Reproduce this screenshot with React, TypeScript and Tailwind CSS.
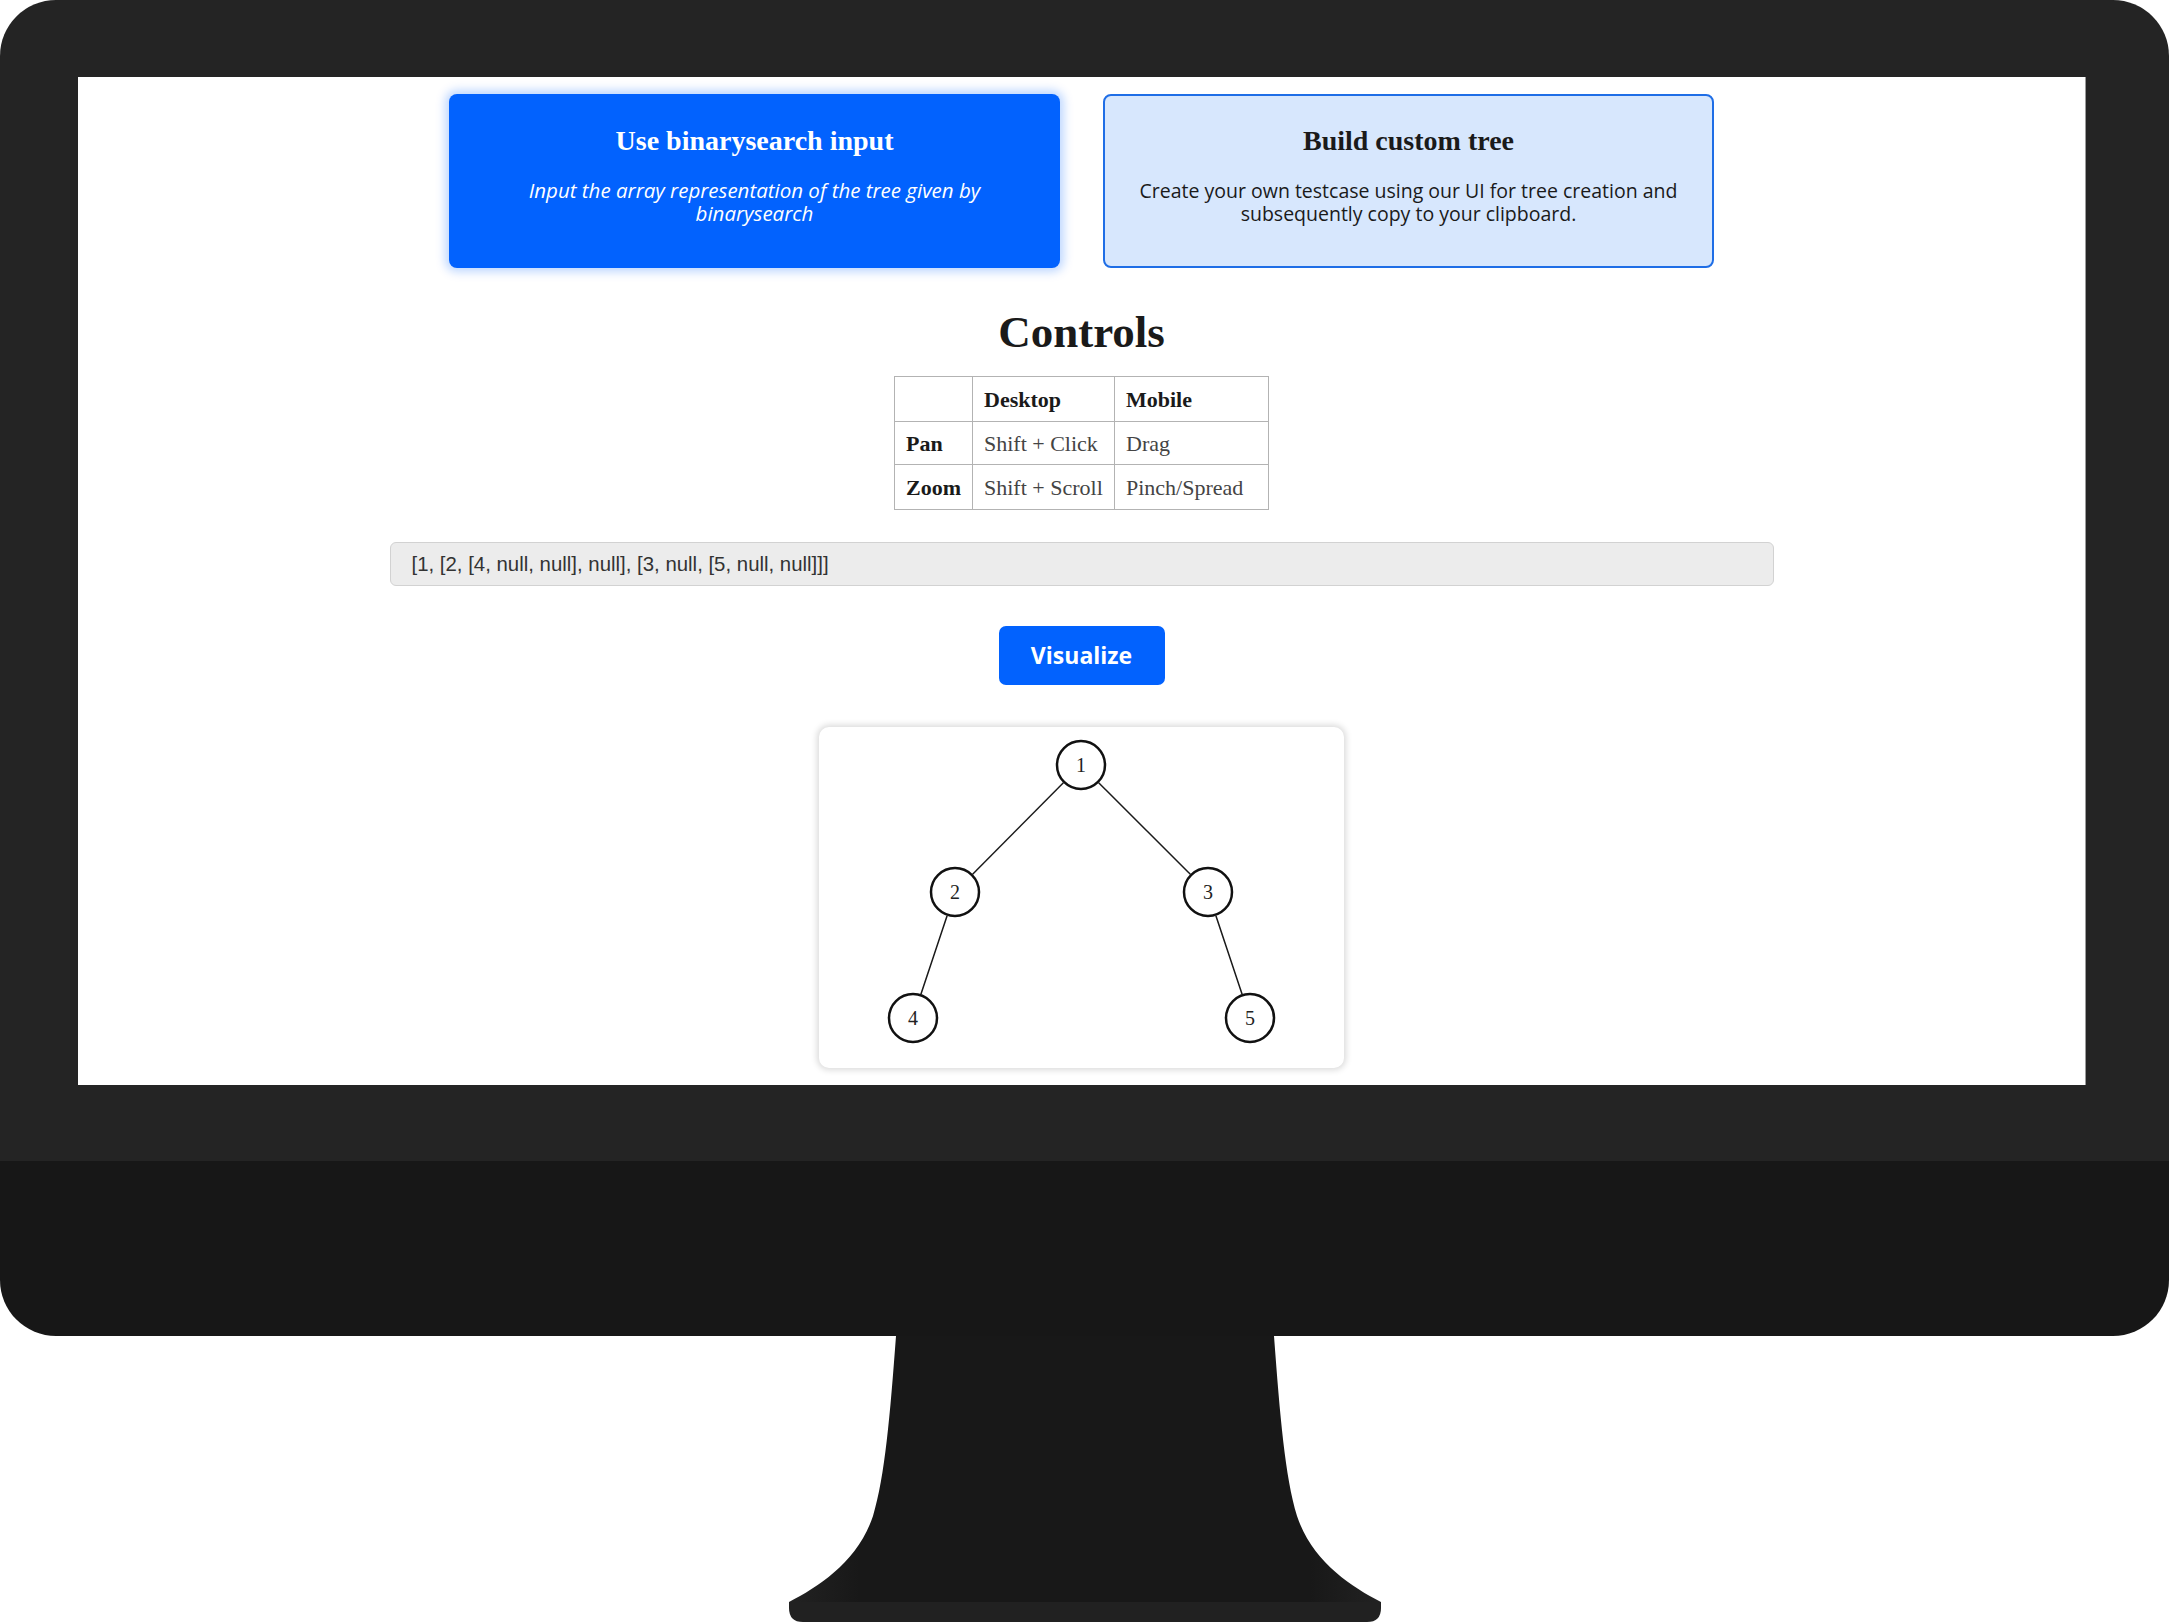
import React from "react";

const serif = "font-['Liberation_Serif',serif]";

const nodes = [
  { id: 1, x: 262, y: 38 },
  { id: 2, x: 136, y: 165 },
  { id: 3, x: 389, y: 165 },
  { id: 4, x: 94, y: 291 },
  { id: 5, x: 431, y: 291 },
];

const edges: [number, number][] = [
  [1, 2],
  [1, 3],
  [2, 4],
  [3, 5],
];

const R = 25;

function TreeView() {
  const byId = (id: number) => nodes.find((n) => n.id === id)!;
  return (
    <svg width="525" height="341" viewBox="0 0 525 341">
      {edges.map(([a, b]) => {
        const p = byId(a);
        const q = byId(b);
        const dx = q.x - p.x;
        const dy = q.y - p.y;
        const len = Math.hypot(dx, dy);
        const ux = dx / len;
        const uy = dy / len;
        return (
          <line
            key={`${a}-${b}`}
            x1={p.x + ux * R}
            y1={p.y + uy * R}
            x2={q.x - ux * R}
            y2={q.y - uy * R}
            stroke="#1a1a1a"
            strokeWidth={1.5}
          />
        );
      })}
      {nodes.map((n) => (
        <g key={n.id}>
          <circle
            cx={n.x}
            cy={n.y}
            r={R - 1}
            fill="white"
            stroke="#111"
            strokeWidth={2.5}
          />
          <text
            x={n.x}
            y={n.y + 7}
            textAnchor="middle"
            fontSize="20"
            fontFamily="'Liberation Serif', serif"
            fill="#222"
          >
            {n.id}
          </text>
        </g>
      ))}
    </svg>
  );
}

function Stand() {
  return (
    <svg width="610" height="286" viewBox="0 0 610 286" className="mx-auto block">
      <defs>
        <linearGradient id="standBody" x1="0" x2="1" y1="0" y2="0">
          <stop offset="0" stopColor="#222" />
          <stop offset="0.12" stopColor="#181818" />
          <stop offset="0.88" stopColor="#181818" />
          <stop offset="1" stopColor="#222" />
        </linearGradient>
      </defs>
      <path
        d="M116,0 L494,0 C500,80 505,140 517,180 C532,225 570,250 601,266 L9,266 C40,250 78,225 93,180 C105,140 110,80 116,0 Z"
        fill="url(#standBody)"
      />
      <path
        d="M9,266 L601,266 L601,272 Q601,286 587,286 L23,286 Q9,286 9,272 Z"
        fill="#212121"
      />
    </svg>
  );
}

export default function App() {
  return (
    <div className="w-[2169px] h-[1622px] bg-white overflow-hidden">
      {/* monitor body */}
      <div className="w-full h-[1336px] rounded-[56px] overflow-hidden flex flex-col">
        <div className="h-[1161px] bg-[#242424] pt-[77px] pl-[78px] pr-[83px]">
          {/* screen */}
          <div className="w-[2008px] h-[1008px] bg-white overflow-hidden flex flex-col items-center pt-[17px] border-r border-[#9a9a9a]">
            <div className="flex gap-[43px]">
              <div className="w-[611px] h-[174px] rounded-[8px] bg-[#0262fe] shadow-[0_0_10px_4px_rgba(0,98,255,0.25)] flex flex-col items-center pt-[31px] text-white">
                <div className={`${serif} font-bold text-[28px] leading-[32px]`}>
                  Use binarysearch input
                </div>
                <p className="mt-[22px] w-[540px] text-center font-['Open_Sans',sans-serif] italic text-[20.5px] leading-[23px]">
                  Input the array representation of the tree given by binarysearch
                </p>
              </div>
              <div className="w-[611px] h-[174px] rounded-[8px] bg-[#d7e7fd] border-2 border-[#1f6ee6] flex flex-col items-center pt-[29px] text-[#1a1a1a]">
                <div className={`${serif} font-bold text-[28px] leading-[32px]`}>
                  Build custom tree
                </div>
                <p className="mt-[22px] w-[580px] text-center font-['Open_Sans',sans-serif] text-[19.5px] leading-[23px]">
                  Create your own testcase using our UI for tree creation and
                  subsequently copy to your clipboard.
                </p>
              </div>
            </div>

            <h2 className={`${serif} font-bold text-[45px] leading-[54px] text-[#1a1a1a] mt-[37px]`}>
              Controls
            </h2>

            <table className={`${serif} mt-[17px] border-collapse text-[22px] text-[#444]`}>
              <tbody>
                <tr className="h-[45px]">
                  <td className="w-[76px] border border-[#b3b3b3] px-[11px]"></td>
                  <td className="w-[142px] border border-[#b3b3b3] px-[11px] font-bold text-[#1a1a1a]">
                    Desktop
                  </td>
                  <td className="w-[154px] border border-[#b3b3b3] px-[11px] font-bold text-[#1a1a1a]">
                    Mobile
                  </td>
                </tr>
                <tr className="h-[43px]">
                  <td className="border border-[#b3b3b3] px-[11px] font-bold text-[#1a1a1a]">Pan</td>
                  <td className="border border-[#b3b3b3] px-[11px]">Shift + Click</td>
                  <td className="border border-[#b3b3b3] px-[11px]">Drag</td>
                </tr>
                <tr className="h-[45px]">
                  <td className="border border-[#b3b3b3] px-[11px] font-bold text-[#1a1a1a]">Zoom</td>
                  <td className="border border-[#b3b3b3] px-[11px]">Shift + Scroll</td>
                  <td className="border border-[#b3b3b3] px-[11px]">Pinch/Spread</td>
                </tr>
              </tbody>
            </table>

            <div className="mt-[32px] w-[1384px] h-[44px] rounded-[6px] bg-[#ececec] border border-[#d2d2d2] flex items-center pl-[21px] font-['Liberation_Sans',sans-serif] text-[20.4px] text-[#333]">
              [1, [2, [4, null, null], null], [3, null, [5, null, null]]]
            </div>

            <button className="mt-[40px] w-[166px] h-[59px] rounded-[7px] bg-[#0262fe] text-white font-['Open_Sans',sans-serif] font-bold text-[23px]">
              Visualize
            </button>

            <div className="mt-[42px] w-[525px] h-[341px] shrink-0 rounded-[10px] bg-white shadow-[0_0_6px_2px_rgba(0,0,0,0.15)]">
              <TreeView />
            </div>
          </div>
        </div>
        {/* chin */}
        <div className="flex-1 bg-[#171717]" />
      </div>
      <Stand />
    </div>
  );
}
